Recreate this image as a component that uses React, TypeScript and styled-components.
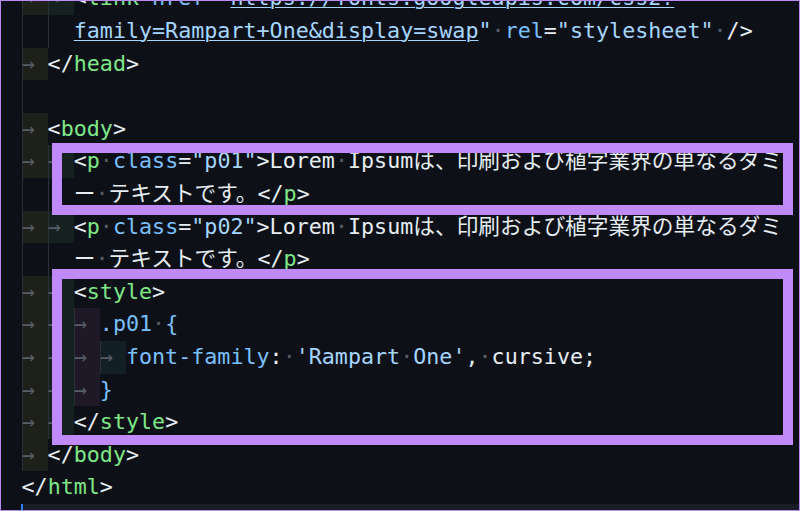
import React from 'react';
import styled, { createGlobalStyle, css } from 'styled-components';

const GlobalStyle = createGlobalStyle`
  html, body { margin: 0; padding: 0; background: #0d1117; }
  body { width: 800px; height: 511px; overflow: hidden; }
`;

type Kind = 'p' | 't' | 'a' | 's' | 'u' | 'w';
type Tk = [Kind, string];
interface Line {
  level: number;
  fill: boolean;
  toks: Tk[];
  current?: boolean;
}

const colors: Record<Kind, string> = {
  p: '#e6edf3',
  t: '#7ee787',
  a: '#79c0ff',
  s: '#a5d6ff',
  u: '#a5d6ff',
  w: '#575d65',
};

const rainbow = [
  'rgba(255,255,64,0.07)',
  'rgba(127,255,127,0.07)',
  'rgba(255,127,255,0.07)',
  'rgba(79,236,236,0.07)',
];

const Frame = styled.div`
  position: relative;
  width: 800px;
  height: 511px;
  box-sizing: border-box;
  border: 1px solid #b98bf3;
  background: #0d1117;
  overflow: hidden;
  display: flex;
`;

const Margin = styled.div`
  width: 20.5px;
  flex: none;
`;

const Lines = styled.div`
  flex: 1;
  margin-top: -18.6px;
  font-family: 'DejaVu Sans Mono', 'Noto Sans CJK JP', monospace;
  font-size: 21.7px;
  line-height: 32.6px;
  color: #e6edf3;
`;

const Row = styled.div<{ $current?: boolean }>`
  height: 32.6px;
  display: flex;
  white-space: pre;
  background: ${(p) => (p.$current ? 'rgba(110,118,129,0.12)' : 'transparent')};
`;

const Indent = styled.span<{ $level: number; $fill: boolean }>`
  flex: none;
  width: 2ch;
  height: 100%;
  box-shadow: inset 1px 0 0 #2a3037;
  background: ${(p) => (p.$fill ? rainbow[p.$level % 4] : 'transparent')};
  color: ${colors.w};
`;

const Code = styled.span`
  white-space: pre;
`;

const Tok = styled.span<{ $k: Kind }>`
  color: ${(p) => colors[p.$k]};
  ${(p) =>
    p.$k === 'u' &&
    css`
      text-decoration: underline;
      text-decoration-thickness: 1px;
      text-underline-offset: 2px;
    `}
`;

const Cursor = styled.span`
  flex: none;
  width: 2px;
  height: 100%;
  margin-left: -0.5px;
  background: #2f81f7;
`;

const Highlight = styled.div<{ $top: number; $height: number }>`
  position: absolute;
  left: 51px;
  top: ${(p) => p.$top}px;
  width: 741px;
  height: ${(p) => p.$height}px;
  box-sizing: border-box;
  border: 10px solid #c08afc;
  pointer-events: none;
`;

const W: Tk = ['w', '·'];

const lines: Line[] = [
  {
    level: 2,
    fill: true,
    toks: [['p', '<'], ['t', 'link'], W, ['a', 'href'], ['p', '='], ['s', '"'], ['u', 'https://fonts.googleapis.com/css2?']],
  },
  {
    level: 2,
    fill: false,
    toks: [['u', 'family=Rampart+One&display=swap'], ['s', '"'], W, ['a', 'rel'], ['p', '='], ['s', '"stylesheet"'], W, ['p', '/>']],
  },
  { level: 1, fill: true, toks: [['p', '</'], ['t', 'head'], ['p', '>']] },
  { level: 1, fill: false, toks: [] },
  { level: 1, fill: true, toks: [['p', '<'], ['t', 'body'], ['p', '>']] },
  {
    level: 2,
    fill: true,
    toks: [['p', '<'], ['t', 'p'], W, ['a', 'class'], ['p', '='], ['s', '"p01"'], ['p', '>Lorem'], W, ['p', 'Ipsumは、印刷および植字業界の単なるダミ']],
  },
  { level: 2, fill: false, toks: [['p', 'ー'], W, ['p', 'テキストです。</'], ['t', 'p'], ['p', '>']] },
  {
    level: 2,
    fill: true,
    toks: [['p', '<'], ['t', 'p'], W, ['a', 'class'], ['p', '='], ['s', '"p02"'], ['p', '>Lorem'], W, ['p', 'Ipsumは、印刷および植字業界の単なるダミ']],
  },
  { level: 2, fill: false, toks: [['p', 'ー'], W, ['p', 'テキストです。</'], ['t', 'p'], ['p', '>']] },
  { level: 2, fill: true, toks: [['p', '<'], ['t', 'style'], ['p', '>']] },
  { level: 3, fill: true, toks: [['a', '.p01'], W, ['a', '{']] },
  {
    level: 4,
    fill: true,
    toks: [['a', 'font-family'], ['p', ':'], W, ['s', "'Rampart"], W, ['s', "One'"], ['p', ','], W, ['p', 'cursive;']],
  },
  { level: 3, fill: true, toks: [['a', '}']] },
  { level: 2, fill: true, toks: [['p', '</'], ['t', 'style'], ['p', '>']] },
  { level: 1, fill: true, toks: [['p', '</'], ['t', 'body'], ['p', '>']] },
  { level: 0, fill: true, toks: [['p', '</'], ['t', 'html'], ['p', '>']] },
  { level: 0, fill: false, toks: [], current: true },
];

export default function App() {
  return (
    <>
      <GlobalStyle />
      <Frame>
        <Margin />
        <Lines>
          {lines.map((line, i) => (
            <Row key={i} $current={line.current}>
              {line.current && <Cursor />}
              {Array.from({ length: line.level }).map((_, l) => (
                <Indent key={l} $level={l} $fill={line.fill}>
                  {line.fill ? '→' : ''}
                </Indent>
              ))}
              <Code>
                {line.toks.map(([k, text], j) => (
                  <Tok key={j} $k={k}>
                    {text}
                  </Tok>
                ))}
              </Code>
            </Row>
          ))}
        </Lines>
        <Highlight $top={142.3} $height={71.4} />
        <Highlight $top={268.3} $height={175.7} />
      </Frame>
    </>
  );
}
